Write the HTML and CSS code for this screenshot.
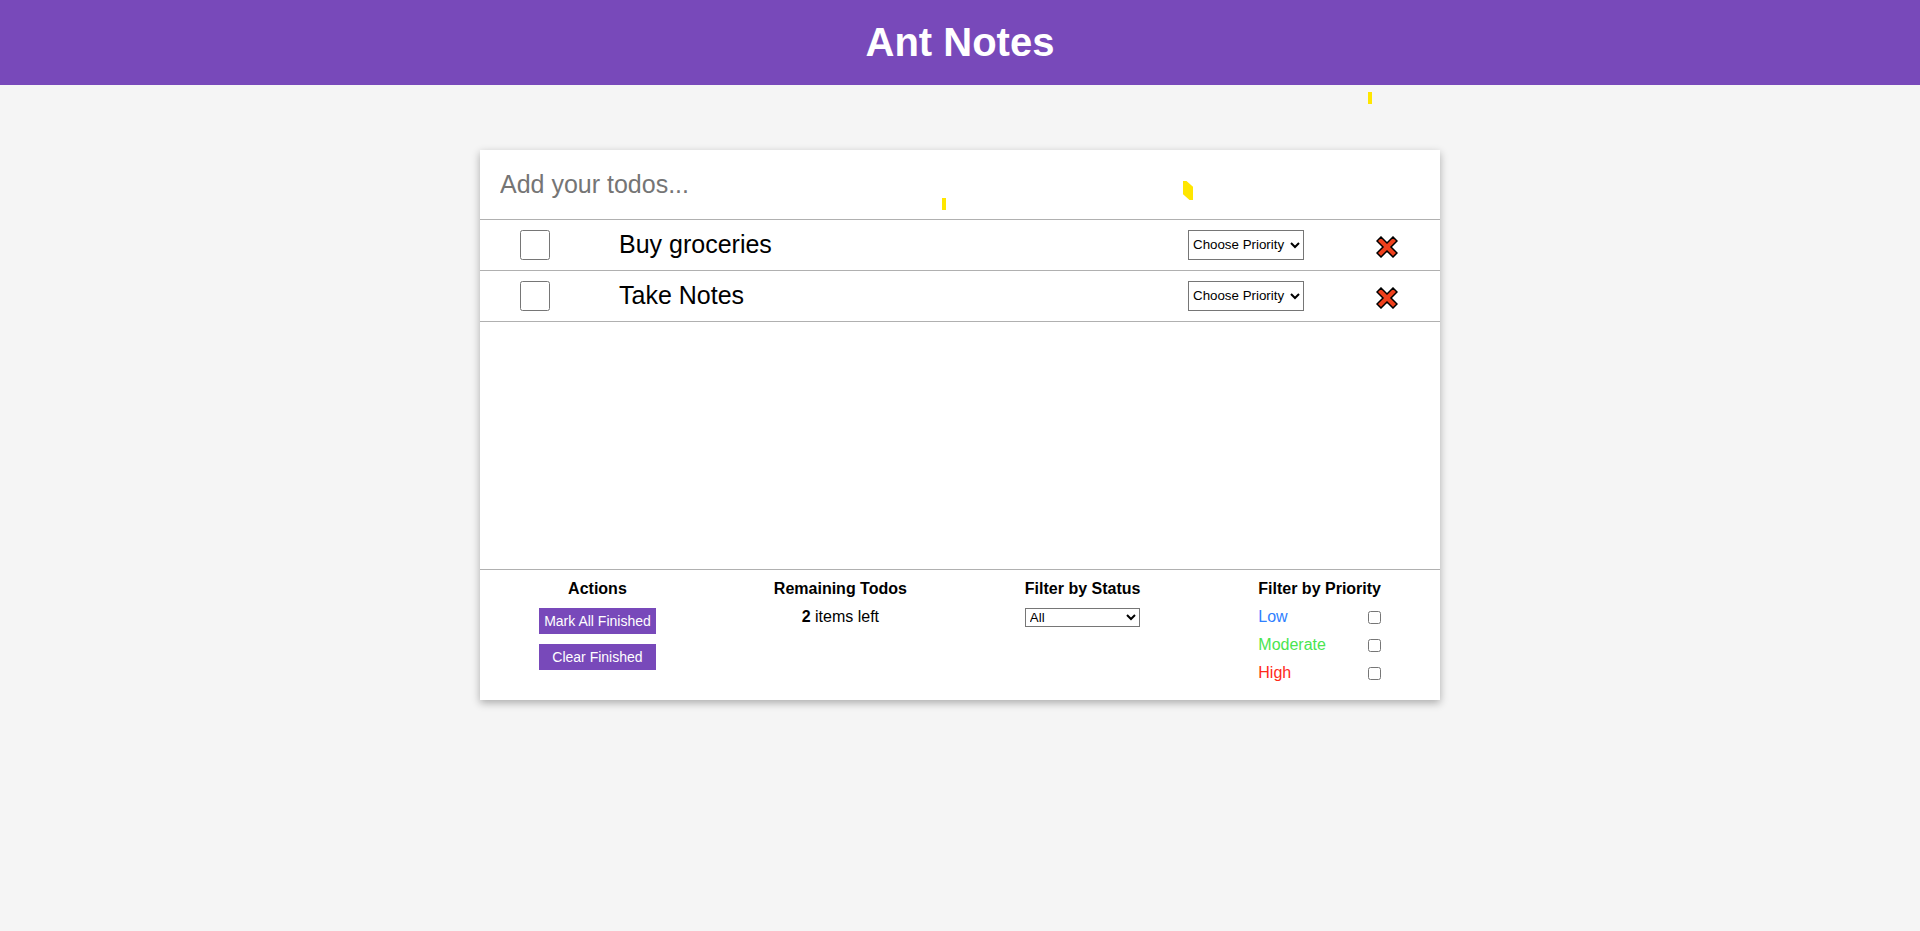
FILE: index.html
```html
<!DOCTYPE html>
<html lang="en">
<head>
    <meta charset="UTF-8">
    <title>Ant Notes</title>
    <link rel="stylesheet" href="styles.css">
</head>
<body>
<header class="topBar">
    <h1>Ant Notes</h1>
</header>
<div class="confetti confettiOne"></div>
<div class="confetti confettiTwo"></div>
<div class="confetti confettiThree"></div>
<main class="card">
    <input class="newTodo" type="text" placeholder="Add your todos...">
    <ul class="todoList">
        <li class="todoItem">
            <input class="todoCheck" type="checkbox">
            <span class="todoText">Buy groceries</span>
            <select class="todoPriority">
                <option>Choose Priority</option>
                <option>Low</option>
                <option>Moderate</option>
                <option>High</option>
            </select>
            <svg class="removeIcon" viewBox="0 0 22 22" width="22" height="22">
                <path d="M5 1 11 7 17 1 21 5 15 11 21 17 17 21 11 15 5 21 1 17 7 11 1 5Z"/>
            </svg>
        </li>
        <li class="todoItem">
            <input class="todoCheck" type="checkbox">
            <span class="todoText">Take Notes</span>
            <select class="todoPriority">
                <option>Choose Priority</option>
                <option>Low</option>
                <option>Moderate</option>
                <option>High</option>
            </select>
            <svg class="removeIcon" viewBox="0 0 22 22" width="22" height="22">
                <path d="M5 1 11 7 17 1 21 5 15 11 21 17 17 21 11 15 5 21 1 17 7 11 1 5Z"/>
            </svg>
        </li>
    </ul>
    <footer class="cardFooter">
        <div class="footerCol">
            <h4>Actions</h4>
            <button class="actionBtn">Mark All Finished</button>
            <button class="actionBtn">Clear Finished</button>
        </div>
        <div class="footerCol">
            <h4>Remaining Todos</h4>
            <p class="remaining"><b>2</b> items left</p>
        </div>
        <div class="footerCol">
            <h4>Filter by Status</h4>
            <select class="statusSelect">
                <option>All</option>
                <option>Active</option>
                <option>Finished</option>
            </select>
        </div>
        <div class="footerCol">
            <h4>Filter by Priority</h4>
            <label class="priorityRow low">Low <input type="checkbox"></label>
            <label class="priorityRow moderate">Moderate <input type="checkbox"></label>
            <label class="priorityRow high">High <input type="checkbox"></label>
        </div>
    </footer>
</main>
</body>
</html>
```

FILE: styles.css
```css
*{
    padding:0px;
    margin:0px;
    list-style: none;
    box-sizing: border-box;
}
html, body{
    height: 100%;
}
body{
    background-color: #f5f5f5;
    font-family: "Liberation Sans", Arial, sans-serif;
    color: #000;
}
.topBar{
    height: 85px;
    background-color: #7849ba;
    color: #fff;
    display: flex;
    align-items: center;
    justify-content: center;
}
.topBar h1{
    font-size: 40px;
}
.card{
    width: 960px;
    margin: 65px auto 0px;
    background-color: #fff;
    box-shadow: 0px 3px 8px rgba(0,0,0,0.3);
}
.newTodo{
    display: block;
    width: 100%;
    height: 70px;
    padding: 0px 20px;
    border: none;
    border-bottom: 1px solid #b0b0b0;
    outline: none;
    font-family: inherit;
    font-size: 25px;
}
.todoList{
    height: 349px;
}
.todoItem{
    display: flex;
    align-items: center;
    height: 51px;
    padding-left: 40px;
    padding-bottom: 1px;
    border-bottom: 1px solid #b0b0b0;
}
.todoCheck{
    width: 30px;
    height: 30px;
    margin-right: 69px;
}
.todoText{
    flex: 1;
    font-size: 25px;
}
.todoPriority{
    width: 116px;
    height: 30px;
    margin-right: 72px;
    background-color: #fff;
    font-family: inherit;
    font-size: 13.33px;
}
.removeIcon{
    margin-top: 4px;
    margin-right: 42px;
}
.removeIcon path{
    fill: #f0401c;
    stroke: #000;
    stroke-width: 1.5;
}
.cardFooter{
    display: flex;
    justify-content: space-around;
    height: 131px;
    padding-top: 10px;
    border-top: 1px solid #b0b0b0;
}
.footerCol{
    display: flex;
    flex-direction: column;
    align-items: stretch;
}
.footerCol h4{
    font-size: 16px;
    line-height: 18px;
    margin-bottom: 10px;
    text-align: center;
}
.actionBtn{
    width: 117px;
    height: 26px;
    margin-bottom: 10px;
    border: none;
    background-color: #7849ba;
    color: #fff;
    font-family: inherit;
    font-size: 14px;
}
.remaining{
    font-size: 16px;
    line-height: 18px;
    text-align: center;
}
.statusSelect{
    height: 19px;
    background-color: #fff;
    font-family: inherit;
    font-size: 13.33px;
}
.priorityRow{
    display: flex;
    justify-content: space-between;
    align-items: center;
    height: 18px;
    margin-bottom: 10px;
    font-size: 16px;
}
.priorityRow input{
    margin: 0px;
}
.low{
    color: #2f80ff;
}
.moderate{
    color: #4ae54f;
}
.high{
    color: #ff2a1a;
}
.confetti{
    position: absolute;
    background-color: #ffe600;
}
.confettiOne{
    left: 1368px;
    top: 92px;
    width: 4px;
    height: 12px;
}
.confettiTwo{
    left: 1183px;
    top: 181px;
    width: 10px;
    height: 19px;
    clip-path: polygon(0 0, 35% 0, 100% 30%, 100% 100%, 65% 100%, 0 70%);
}
.confettiThree{
    left: 942px;
    top: 198px;
    width: 4px;
    height: 12px;
}
```
